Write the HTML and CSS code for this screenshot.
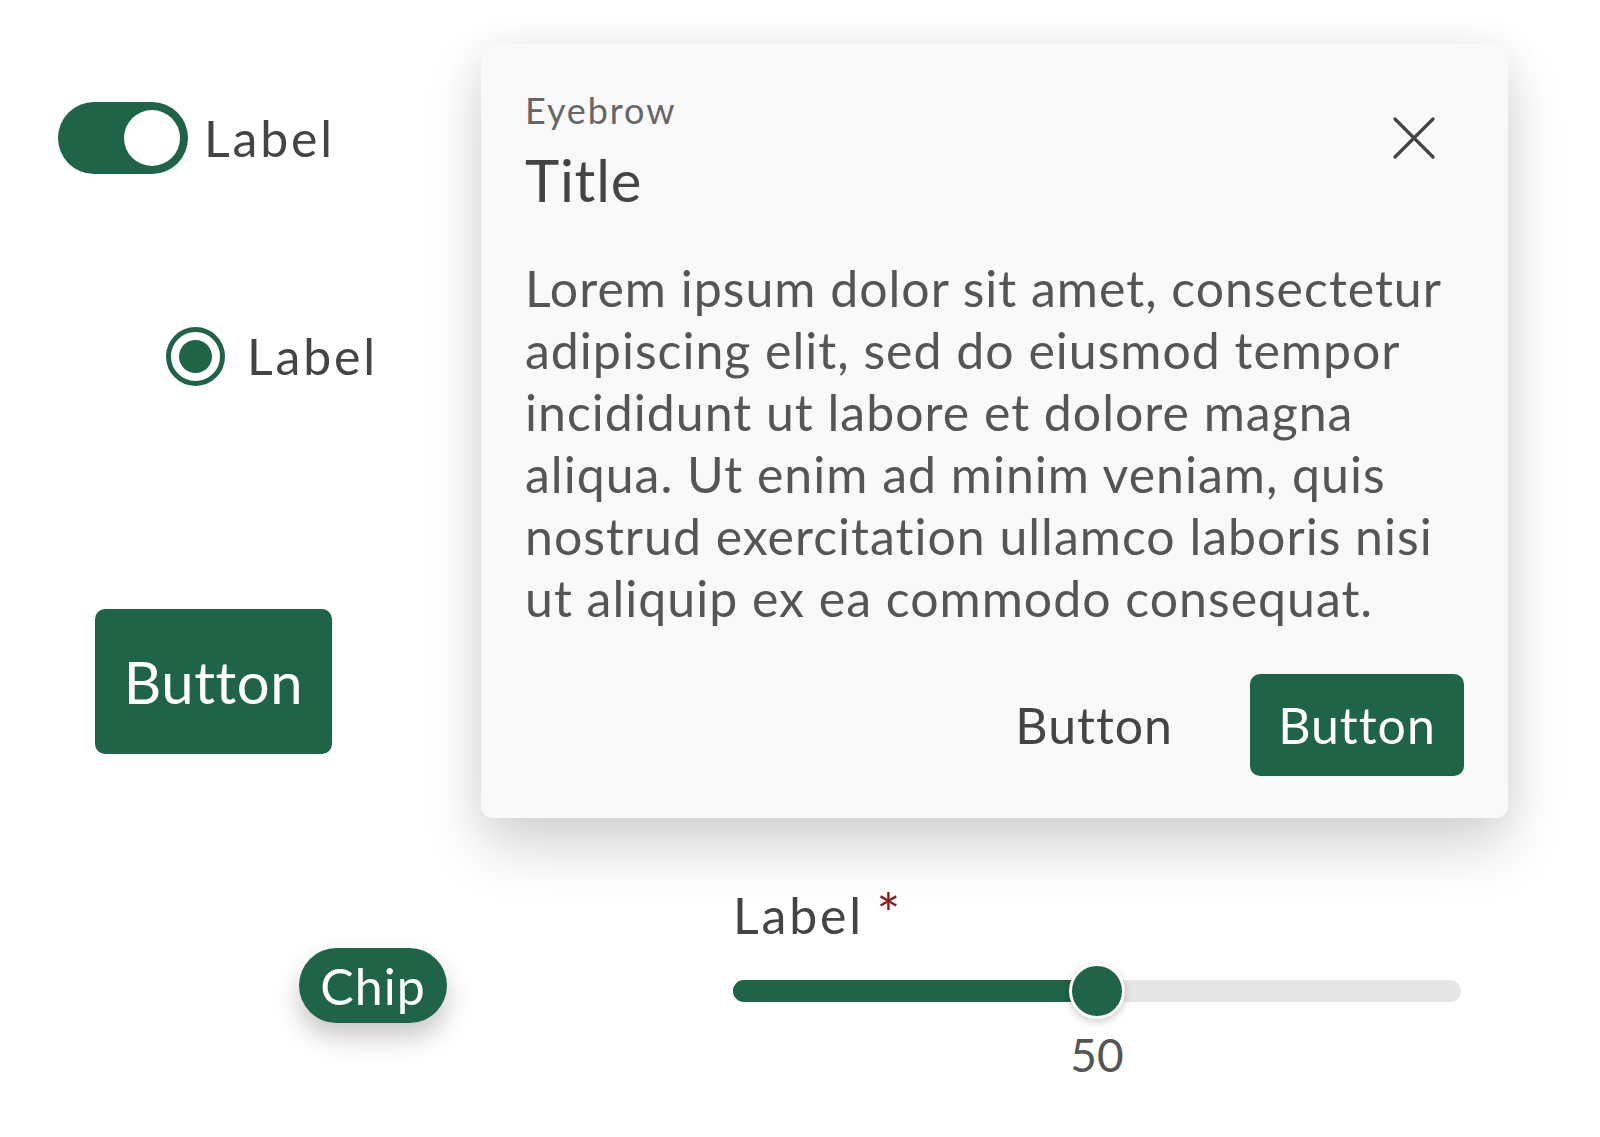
FILE: index.html
```html
<!DOCTYPE html>
<html lang="en">
<head>
<meta charset="utf-8">
<title>Components</title>
<link rel="stylesheet" href="styles.css">
</head>
<body>
<div class="page">
  <div class="top">
    <div class="left">
      <label class="toggle-row">
        <span class="toggle"><span class="knob"></span></span>
        <span class="lbl">Label</span>
      </label>
      <label class="radio-row">
        <span class="radio"><span class="dot"></span></span>
        <span class="lbl">Label</span>
      </label>
      <button class="btn btn-lg">Button</button>
    </div>
    <section class="dialog">
      <header class="dlg-head">
        <div class="dlg-titles">
          <div class="eyebrow">Eyebrow</div>
          <h2 class="title">Title</h2>
        </div>
        <button class="close" aria-label="Close">
          <svg width="42" height="42" viewBox="0 0 42 42"><path d="M2 2 L40 40 M40 2 L2 40" stroke="#444" stroke-width="3.2" stroke-linecap="round" fill="none"/></svg>
        </button>
      </header>
      <p class="body">Lorem ipsum dolor sit amet, consectetur<br>adipiscing elit, sed do eiusmod tempor<br>incididunt ut labore et dolore magna<br>aliqua. Ut enim ad minim veniam, quis<br>nostrud exercitation ullamco laboris nisi<br>ut aliquip ex ea commodo consequat.</p>
      <div class="actions">
        <button class="btn-text">Button</button>
        <button class="btn btn-md">Button</button>
      </div>
    </section>
  </div>
  <div class="bottom">
    <span class="chip">Chip</span>
    <div class="slider">
      <div class="slider-label"><span class="sl-text">Label</span> <span class="req">*</span></div>
      <div class="track">
        <div class="fill" style="width:50%"></div>
        <div class="thumb" style="left:50%"></div>
      </div>
      <div class="value">50</div>
    </div>
  </div>
</div>
</body>
</html>
```
FILE: styles.css
```css
* { box-sizing: border-box; }
html, body { margin: 0; padding: 0; background: #fff; }
body {
  font-family: "Lato", "Noto Sans", sans-serif;
  color: #444;
  width: 1600px;
  height: 1137px;
  overflow: hidden;
}
.page { display: flex; flex-direction: column; }
.top { display: flex; padding-top: 44px; }
.left {
  width: 481px;
  flex: none;
  display: flex;
  flex-direction: column;
  align-items: flex-start;
}
.lbl { font-size: 50px; line-height: 1.2; color: #444; letter-spacing: 2.8px; }

.toggle-row {
  margin-top: 58px;
  margin-left: 58px;
  display: flex;
  align-items: center;
  gap: 16px;
}
.toggle {
  width: 130px;
  height: 72px;
  border-radius: 36px;
  background: #1f6446;
  display: flex;
  align-items: center;
  justify-content: flex-end;
  padding-right: 8px;
}
.knob {
  width: 56px;
  height: 56px;
  border-radius: 50%;
  background: #fff;
}

.radio-row {
  margin-top: 152px;
  margin-left: 166px;
  display: flex;
  align-items: center;
  gap: 22px;
}
.radio {
  width: 59px;
  height: 59px;
  border-radius: 50%;
  border: 5px solid #1f6446;
  display: flex;
  align-items: center;
  justify-content: center;
}
.dot {
  width: 33px;
  height: 33px;
  border-radius: 50%;
  background: #1f6446;
}

.btn {
  border: none;
  background: #1f6446;
  color: #fff;
  font-family: inherit;
  padding: 0;
  display: flex;
  align-items: center;
  justify-content: center;
}
.btn-lg {
  margin-top: 223px;
  margin-left: 95px;
  width: 237px;
  height: 145px;
  border-radius: 10px;
  font-size: 58px;
  letter-spacing: 0.6px;
}

.dialog {
  width: 1027px;
  height: 774px;
  background: #f9f9f9;
  border-radius: 12px;
  box-shadow: 0 30px 60px rgba(0, 0, 0, 0.16), 0 0 40px rgba(0, 0, 0, 0.06);
  padding: 45px 44px 42px 44px;
  display: flex;
  flex-direction: column;
}
.dlg-head {
  display: flex;
  justify-content: space-between;
  align-items: flex-start;
}
.eyebrow { font-size: 36px; line-height: 1.2; color: #666; letter-spacing: 1.9px; }
.title {
  margin: 13px 0 0 0;
  font-size: 58px;
  line-height: 1.2;
  font-weight: 400;
  color: #444;
  letter-spacing: 0.8px;
}
.close {
  border: none;
  background: none;
  padding: 0;
  margin-top: 28px;
  margin-right: 29px;
  width: 42px;
  height: 42px;
  display: block;
}
.close svg { display: block; }
.body {
  margin: 42px 0 0 0;
  font-size: 50px;
  line-height: 62px;
  color: #555;
  letter-spacing: 1px;
}
.actions {
  margin-top: auto;
  display: flex;
  justify-content: flex-end;
  align-items: center;
  gap: 46px;
}
.btn-text {
  border: none;
  background: none;
  font-family: inherit;
  font-size: 50px;
  color: #444;
  padding: 0 31px;
  height: 102px;
  letter-spacing: 1px;
}
.btn-md {
  width: 214px;
  height: 102px;
  border-radius: 10px;
  font-size: 50px;
  letter-spacing: 1px;
}

.bottom { display: flex; align-items: flex-start; }
.chip {
  margin-top: 130px;
  margin-left: 299px;
  width: 148px;
  height: 75px;
  border-radius: 38px;
  background: #1f6446;
  color: #fff;
  font-size: 50px;
  letter-spacing: 1px;
  display: flex;
  align-items: center;
  justify-content: center;
  box-shadow: 0 14px 26px rgba(0, 0, 0, 0.22);
}
.slider {
  margin-top: 67px;
  margin-left: 286px;
  width: 728px;
  display: flex;
  flex-direction: column;
}
.slider-label { font-size: 50px; line-height: 1.2; color: #444; }
.sl-text { letter-spacing: 2.8px; }
.req { color: #8b1a1a; font-size: 56px; line-height: 1; }
.track {
  position: relative;
  margin-top: 35px;
  height: 22px;
  border-radius: 11px;
  background: #e6e6e6;
}
.fill {
  height: 100%;
  border-radius: 11px;
  background: #1f6446;
}
.thumb {
  position: absolute;
  top: 50%;
  width: 56px;
  height: 56px;
  margin-left: -28px;
  margin-top: -28px;
  border-radius: 50%;
  background: #1f6446;
  border: 3px solid #fff;
  box-shadow: 0 3px 8px rgba(0, 0, 0, 0.2);
}
.value {
  margin-top: 25px;
  text-align: center;
  font-size: 46px;
  line-height: 1.2;
  color: #555;
}
```
